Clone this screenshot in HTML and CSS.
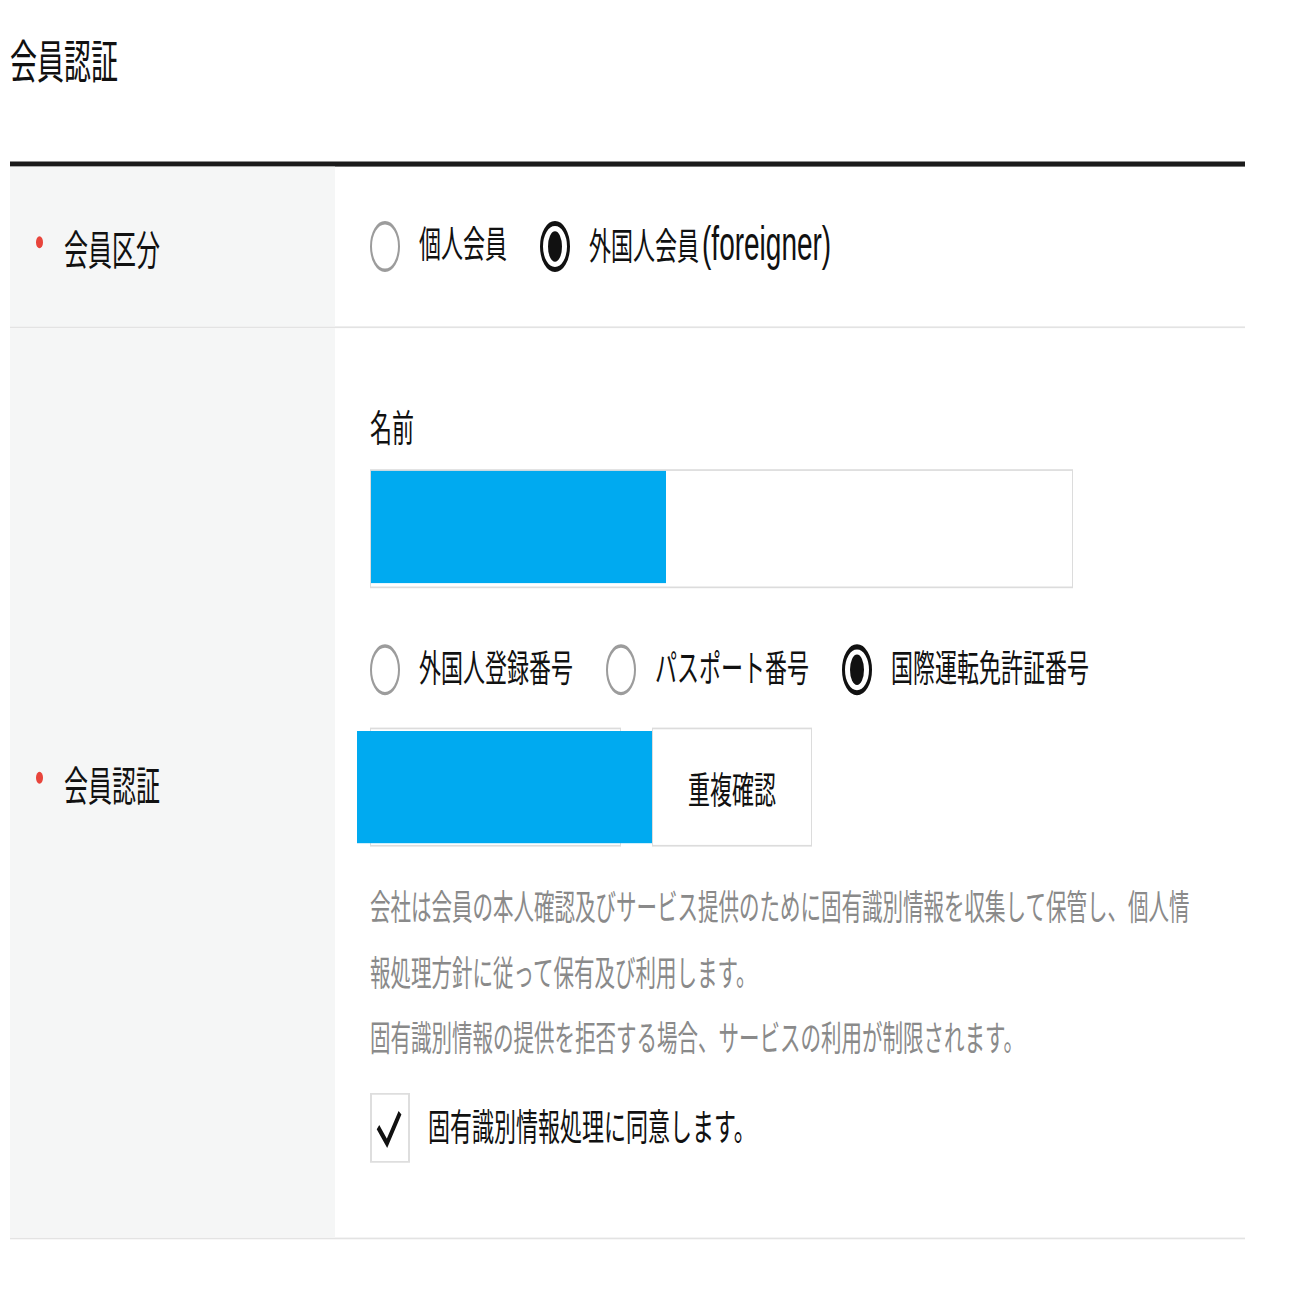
FILE: index.html
```html
<!DOCTYPE html>
<html lang="ja">
<head>
  <meta charset="UTF-8">
  <meta name="viewport" content="width=device-width, initial-scale=1.0">
  <title>会員認証</title>
  <link rel="stylesheet" href="styles.css">
</head>
<body>
  <div class="page">
    <h1 class="title">会員認証</h1>

    <div class="form">
      <div class="row row-type">
        <div class="head">会員区分</div>
        <div class="cell">
          <div class="radios">
            <label class="radio"><span class="mark"></span><span>個人会員</span></label>
            <label class="radio on"><span class="mark"></span><span>外国人会員<span class="latin">(foreigner)</span></span></label>
          </div>
        </div>
      </div>

      <div class="row">
        <div class="head">会員認証</div>
        <div class="cell cell-auth">
          <div class="field-label">名前</div>
          <div class="input input-name"><div class="masked"></div></div>

          <div class="radios radios-id">
            <label class="radio"><span class="mark"></span><span>外国人登録番号</span></label>
            <label class="radio"><span class="mark"></span><span>パスポート番号</span></label>
            <label class="radio on"><span class="mark"></span><span>国際運転免許証番号</span></label>
          </div>

          <div class="id-row">
            <div class="input input-id"><div class="masked"></div></div>
            <button type="button" class="btn">重複確認</button>
          </div>

          <p class="notice">会社は会員の本人確認及びサービス提供のために固有識別情報を収集して保管し、個人情報処理方針に従って保有及び利用します。<br>固有識別情報の提供を拒否する場合、サービスの利用が制限されます。</p>

          <label class="agree">
            <span class="box">
              <svg width="36" height="39" viewBox="0 0 36 39"><polyline points="6,19 15,28.5 28,10.5" fill="none" stroke="#111" stroke-width="3.5"/></svg>
            </span>
            <span class="agree-text">固有識別情報処理に同意します。</span>
          </label>
        </div>
      </div>
    </div>
  </div>
</body>
</html>
```

FILE: styles.css
```css
html, body {
  min-height: 1304px;
}
body {
  margin: 0;
  background: #fff;
  color: #111;
  font-family: "Liberation Sans", "Noto Sans CJK JP", sans-serif;
}
/* the whole sheet is drawn tall, like the stretched capture */
.page {
  width: 1235px;
  margin-left: 10px;
  transform: scaleY(1.7);
  transform-origin: 0 0;
}
.title {
  margin: 0;
  height: 95px;
  box-sizing: border-box;
  padding-top: 17px;
  font-size: 27px;
  line-height: 40px;
  font-weight: normal;
}
.form {
  border-top: 3.5px solid #1b1b1b;
}
.row {
  display: flex;
  border-bottom: 1px solid #e3e3e3;
}
.row-type {
  height: 94px;
}
.head {
  width: 325px;
  flex: none;
  box-sizing: border-box;
  padding-left: 26px;
  display: flex;
  align-items: center;
  background: #f5f6f6;
  font-size: 24px;
}
.head::before {
  content: "";
  width: 7px;
  height: 7px;
  margin-right: 21px;
  margin-bottom: 6px;
  border-radius: 50%;
  background: #e8453c;
}
.cell {
  flex: 1;
  padding-left: 35px;
  display: flex;
  flex-direction: column;
  justify-content: center;
}
.cell-auth {
  justify-content: flex-start;
  padding: 45px 0 44px 35px;
}

.radios {
  display: flex;
  align-items: center;
  gap: 33px;
  height: 30px;
  font-size: 22px;
}
.radios-id {
  margin-top: 33px;
}
.radio {
  display: flex;
  align-items: center;
  gap: 19px;
  line-height: 30px;
  white-space: nowrap;
}
.radio .latin {
  margin-left: 3px;
  font-size: 28px;
}
.mark {
  width: 30px;
  height: 30px;
  box-sizing: border-box;
  border: 2px solid #9c9c9c;
  border-radius: 50%;
  display: flex;
  align-items: center;
  justify-content: center;
}
.radio.on .mark {
  border: 3px solid #111;
}
.radio.on .mark::after {
  content: "";
  width: 14px;
  height: 18px;
  border-radius: 50%;
  background: #111;
}

.field-label {
  font-size: 22px;
  line-height: 30px;
}
.input {
  height: 70px;
  box-sizing: border-box;
  border: 1px solid #dcdcdc;
  background: #fff;
}
.input-name {
  width: 703px;
  margin-top: 8px;
}
.masked {
  width: 295px;
  height: 66px;
  background: #00aaf0;
}
.id-row {
  display: flex;
  gap: 31px;
  height: 70px;
  margin-top: 19px;
}
.input-id {
  width: 251px;
  position: relative;
}
.input-id .masked {
  position: absolute;
  left: -14px;
  top: 1px;
}
.btn {
  width: 160px;
  height: 70px;
  padding: 0;
  border: 1px solid #dcdcdc;
  background: #fff;
  color: #111;
  font-family: inherit;
  font-size: 22px;
}

.notice {
  margin: 17px 0 0;
  max-width: 830px;
  font-size: 20.5px;
  line-height: 38.5px;
  color: #8a8a8a;
}
.agree {
  display: flex;
  align-items: center;
  gap: 18px;
  margin-top: 12px;
  font-size: 22px;
}
.agree-text {
  margin-bottom: 4px;
}
.box {
  width: 40px;
  height: 41px;
  box-sizing: border-box;
  border-style: solid;
  border-color: #dedede;
  border-width: 1px 2px;
  display: flex;
}
```
